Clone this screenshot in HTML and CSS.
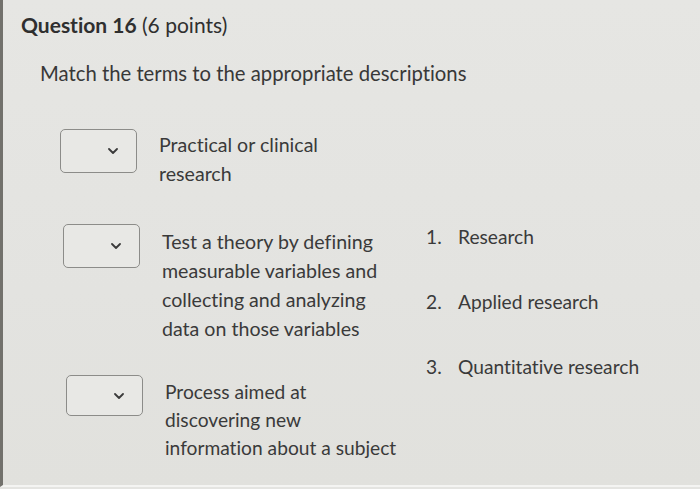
FILE: index.html
```html
<!DOCTYPE html>
<html lang="en">
<head>
<meta charset="utf-8">
<title>Question 16</title>
<link rel="stylesheet" href="styles.css">
</head>
<body>
<main class="page">
  <h1 class="title"><strong>Question 16</strong> (6 points)</h1>
  <p class="prompt">Match the terms to the appropriate descriptions</p>
  <div class="match">
    <div class="terms">
      <div class="row row-1">
        <div class="select"><svg class="chev" viewBox="0 0 10 6" width="10" height="6"><path d="M1 1 L5 5 L9 1" fill="none" stroke="#3a3a3a" stroke-width="1.8" stroke-linecap="round" stroke-linejoin="round"/></svg></div>
        <div class="desc">Practical or clinical<br>research</div>
      </div>
      <div class="row row-2">
        <div class="select"><svg class="chev" viewBox="0 0 10 6" width="10" height="6"><path d="M1 1 L5 5 L9 1" fill="none" stroke="#3a3a3a" stroke-width="1.8" stroke-linecap="round" stroke-linejoin="round"/></svg></div>
        <div class="desc">Test a theory by defining<br>measurable variables and<br>collecting and analyzing<br>data on those variables</div>
      </div>
      <div class="row row-3">
        <div class="select"><svg class="chev" viewBox="0 0 10 6" width="10" height="6"><path d="M1 1 L5 5 L9 1" fill="none" stroke="#3a3a3a" stroke-width="1.8" stroke-linecap="round" stroke-linejoin="round"/></svg></div>
        <div class="desc">Process aimed at<br>discovering new<br>information about a subject</div>
      </div>
    </div>
    <ol class="answers">
      <li><span class="num">1.</span>Research</li>
      <li><span class="num">2.</span>Applied research</li>
      <li><span class="num">3.</span>Quantitative research</li>
    </ol>
  </div>
</main>
</body>
</html>
```

FILE: styles.css
```css
html, body {
  margin: 0;
  padding: 0;
}
body {
  width: 700px;
  height: 489px;
  overflow: hidden;
  background: #e4e4e1;
  font-family: Lato, "Open Sans", sans-serif;
  font-variant-ligatures: none;
  color: #3b3b3b;
}
.page {
  box-sizing: border-box;
  height: 487px;
  border-left: 3px solid #72716c;
  border-bottom: 2px solid #f4f4f2;
  background: linear-gradient(180deg, #e6e6e3 0%, #e3e3e0 60%, #e1e1dd 100%);
  padding: 11px 0 0 18px;
  display: flex;
  flex-direction: column;
}
.title {
  margin: 0;
  font-size: 21px;
  font-weight: 400;
  line-height: 28px;
  color: #2f2f2f;
}
.title strong {
  font-weight: 700;
}
.prompt {
  margin: 21px 0 0 19px;
  font-size: 20.3px;
  line-height: 26px;
  color: #383838;
}
.match {
  display: flex;
  margin-top: 43px;
  padding-left: 39px;
}
.terms {
  width: 366px;
  display: flex;
  flex-direction: column;
  gap: 32px;
}
.row {
  display: flex;
  gap: 22px;
}
.row-2 {
  margin-top: 4px;
  margin-left: 3px;
}
.row-3 {
  margin-left: 6px;
}
.select {
  box-sizing: border-box;
  width: 77px;
  height: 44px;
  flex: none;
  border: 1.5px solid #8c8c89;
  border-radius: 5px;
  background: #e8e8e5;
  display: flex;
  align-items: center;
  justify-content: flex-end;
  padding-right: 18px;
}
.row-3 .select {
  height: 41px;
}
.chev {
  display: block;
}
.desc {
  padding-top: 1px;
  font-size: 19.6px;
  line-height: 29px;
  color: #3a3a3a;
}
.row-2 .desc {
  padding-top: 3px;
}
.row-3 .desc {
  padding-top: 3px;
  line-height: 28px;
  font-size: 19.2px;
}
.answers {
  list-style: none;
  margin: 94px 0 0 0;
  padding: 0;
  display: flex;
  flex-direction: column;
  gap: 37px;
}
.answers li {
  display: flex;
  font-size: 19.2px;
  line-height: 28px;
  color: #3a3a3a;
}
.num {
  width: 32px;
  flex: none;
}
```
